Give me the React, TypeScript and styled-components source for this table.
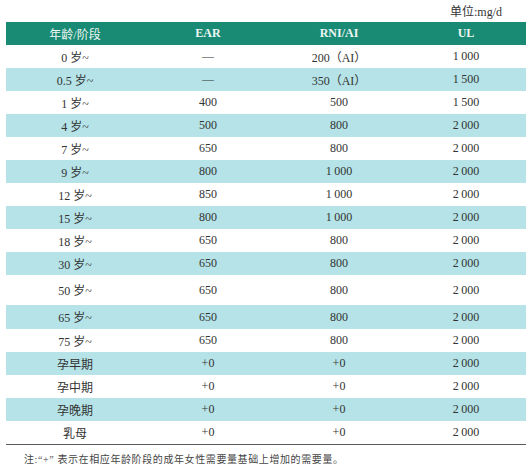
import React from "react";
import styled, { createGlobalStyle } from "styled-components";

const Global = createGlobalStyle`
  html, body { margin: 0; padding: 0; background: #ffffff; }
  body { width: 528px; height: 466px; overflow: hidden; }
`;

const Page = styled.div`
  width: 528px;
  height: 466px;
  display: flex;
  flex-direction: column;
  font-family: "Liberation Serif", "Noto Sans CJK SC", serif;
  color: #2e2e2e;
`;

const Unit = styled.div`
  height: 22px;
  display: flex;
  align-items: center;
  justify-content: flex-end;
  padding-right: 26px;
  font-size: 12px;
  color: #333;
`;

const Table = styled.div`
  margin: 0 2px 0 6px;
  display: flex;
  flex-direction: column;
  border-bottom: 1px solid #5a5a5a;
`;

const Row = styled.div<{ $band?: boolean; $head?: boolean; $h?: number }>`
  display: grid;
  grid-template-columns: 138px 128px 134px 120px;
  height: ${(p) => p.$h ?? 23}px;
  align-items: center;
  background: ${(p) => (p.$head ? "#198a73" : p.$band ? "#b5e3e7" : "#ffffff")};
  color: ${(p) => (p.$head ? "#eef7f3" : "#333333")};
`;

const Cell = styled.div<{ $bold?: boolean }>`
  text-align: center;
  font-size: 12px;
  font-weight: ${(p) => (p.$bold ? 700 : 400)};
  white-space: nowrap;
`;

const Note = styled.div`
  padding: 6px 0 0 24px;
  font-size: 10px;
  letter-spacing: 0.6px;
  color: #444;
  white-space: nowrap;
`;

type R = [string, string, string, string, number?];

const rows: R[] = [
  ["0 岁~", "—", "200（AI）", "1\u2009000"],
  ["0.5 岁~", "—", "350（AI）", "1\u2009500"],
  ["1 岁~", "400", "500", "1\u2009500"],
  ["4 岁~", "500", "800", "2\u2009000"],
  ["7 岁~", "650", "800", "2\u2009000"],
  ["9 岁~", "800", "1\u2009000", "2\u2009000"],
  ["12 岁~", "850", "1\u2009000", "2\u2009000"],
  ["15 岁~", "800", "1\u2009000", "2\u2009000"],
  ["18 岁~", "650", "800", "2\u2009000"],
  ["30 岁~", "650", "800", "2\u2009000"],
  ["50 岁~", "650", "800", "2\u2009000", 30],
  ["65 岁~", "650", "800", "2\u2009000", 24],
  ["75 岁~", "650", "800", "2\u2009000"],
  ["孕早期", "+0", "+0", "2\u2009000"],
  ["孕中期", "+0", "+0", "2\u2009000"],
  ["孕晚期", "+0", "+0", "2\u2009000"],
  ["乳母", "+0", "+0", "2\u2009000"],
];

export default function App() {
  return (
    <Page>
      <Global />
      <Unit>单位:mg/d</Unit>
      <Table>
        <Row $head>
          <Cell>年龄/阶段</Cell>
          <Cell $bold>EAR</Cell>
          <Cell $bold>RNI/AI</Cell>
          <Cell $bold>UL</Cell>
        </Row>
        {rows.map((r, i) => (
          <Row key={r[0]} $band={i % 2 === 1} $h={r[4]}>
            <Cell>{r[0]}</Cell>
            <Cell>{r[1]}</Cell>
            <Cell>{r[2]}</Cell>
            <Cell>{r[3]}</Cell>
          </Row>
        ))}
      </Table>
      <Note>注:“+” 表示在相应年龄阶段的成年女性需要量基础上增加的需要量。</Note>
    </Page>
  );
}
